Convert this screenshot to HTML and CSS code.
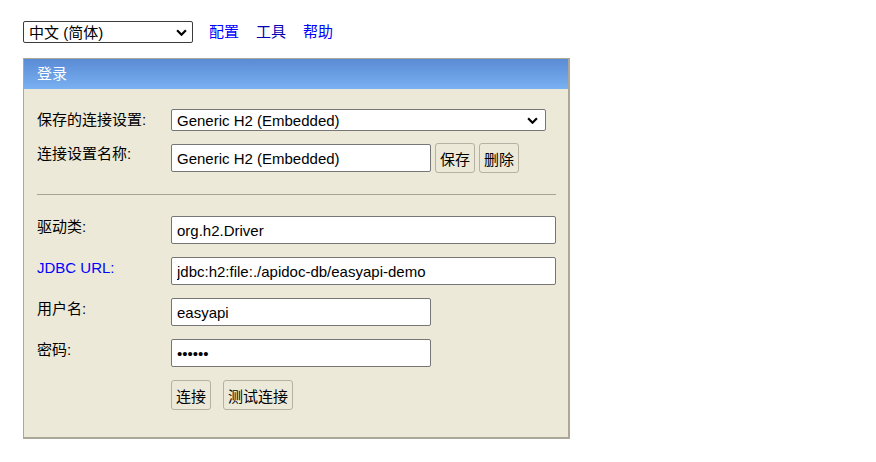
FILE: index.html
```html
<!DOCTYPE html>
<html lang="zh-CN">
<head>
  <meta charset="UTF-8" />
  <title>H2 Console</title>
  <link rel="stylesheet" href="styles.css">
</head>
<body>
  <div class="toolbar">
    <div class="select-wrap">
      <select class="lang-select">
        <option>中文 (简体)</option>
      </select>
      <svg class="chevron" viewBox="0 0 10 6"><polyline points="1,1 5,5 9,1" /></svg>
    </div>
    <a href="#" class="nav">配置</a>
    <a href="#" class="nav visited">工具</a>
    <a href="#" class="nav">帮助</a>
  </div>

  <form class="login">
    <div class="login-title">登录</div>
    <div class="login-body">
      <div class="row row-setting">
        <label>保存的连接设置:</label>
        <div class="select-wrap">
          <select class="setting-select">
            <option>Generic H2 (Embedded)</option>
          </select>
          <svg class="chevron chevron-setting" viewBox="0 0 10 6"><polyline points="1,1 5,5 9,1" /></svg>
        </div>
      </div>
      <div class="row row-name">
        <label>连接设置名称:</label>
        <input type="text" class="short" value="Generic H2 (Embedded)">
        <button type="button" class="btn btn-save">保存</button>
        <button type="button" class="btn btn-remove">删除</button>
      </div>

      <hr>

      <div class="row">
        <label>驱动类:</label>
        <input type="text" class="wide" value="org.h2.Driver">
      </div>
      <div class="row">
        <label class="url">JDBC URL:</label>
        <input type="text" class="wide" value="jdbc:h2:file:./apidoc-db/easyapi-demo">
      </div>
      <div class="row">
        <label>用户名:</label>
        <input type="text" class="short" value="easyapi">
      </div>
      <div class="row">
        <label>密码:</label>
        <input type="password" class="short" value="easyap">
      </div>
      <div class="row row-actions">
        <label></label>
        <button type="button" class="btn">连接</button>
        <button type="button" class="btn btn-test">测试连接</button>
      </div>
    </div>
  </form>
</body>
</html>
```

FILE: styles.css
```css
body {
  margin: 0;
  padding: 21px 0 0 23px;
  font-family: "Liberation Sans", "Noto Sans CJK SC", sans-serif;
  font-size: 15px;
  color: #000;
  background: #fff;
}
.toolbar {
  display: flex;
  align-items: center;
  height: 22px;
}
.select-wrap {
  position: relative;
}
select, input, button {
  font-family: "Liberation Sans", "Noto Sans CJK SC", sans-serif;
  font-size: 15px;
  color: #000;
  box-sizing: border-box;
}
select {
  appearance: none;
  -webkit-appearance: none;
  background: #fff;
  border-radius: 2px;
  margin: 0;
  display: block;
}
.lang-select {
  width: 170px;
  height: 22px;
  border: 1px solid #3c3c3c;
  padding: 0 0 0 5px;
}
.chevron {
  position: absolute;
  right: 6px;
  top: 8px;
  width: 11px;
  height: 7px;
  pointer-events: none;
  fill: none;
  stroke: #000;
  stroke-width: 2;
}
.chevron-setting {
  right: 8px;
}
.nav {
  margin-left: 17px;
  color: #0000ff;
  text-decoration: none;
  line-height: 22px;
}
.nav:first-of-type {
  margin-left: 16px;
}
.nav.visited {
  color: #0000b0;
}

.login {
  margin: 15px 0 0;
  width: 544px;
  border-style: solid;
  border-color: #aca899;
  border-width: 1px 2px 2px 1px;
  background: #ece9d8;
}
.login-title {
  height: 30px;
  line-height: 30px;
  padding-left: 13px;
  color: #fff;
  background: linear-gradient(#5a8bd5, #79b1f1);
}
.login-body {
  padding: 20px 11px 27px 13px;
}
.row {
  display: flex;
  align-items: flex-start;
  margin-bottom: 13px;
}
.row label {
  flex: none;
  width: 134px;
  padding-top: 2px;
  line-height: 18px;
}
.row label.url {
  color: #0000ff;
}
.row-setting {
  margin-bottom: 12px;
}
.setting-select {
  width: 375px;
  height: 22px;
  border: 1px solid #767676;
  padding: 0 0 0 5px;
}
.row-name {
  margin-bottom: 0;
  align-items: center;
}
.row-name label {
  align-self: flex-start;
}
input {
  height: 28px;
  border: 1px solid #767676;
  border-radius: 2px;
  padding: 0 5px;
  margin: 0;
  background: #fff;
}
input.short {
  width: 260px;
}
input.wide {
  width: 385px;
}
.btn {
  height: 30px;
  margin: 0;
  padding: 0 4px;
  background: #ece9d8;
  border: 1px solid #b5b2a5;
  border-radius: 3px;
}
.btn-save {
  margin-left: 4px;
}
.btn-remove {
  margin-left: 4px;
}
.btn-test {
  margin-left: 12px;
}
.row-actions {
  margin-bottom: 0;
}
hr {
  height: 0;
  border: 0;
  border-top: 1px solid #a7a497;
  margin: 21px 1px 21px 0;
}
```
